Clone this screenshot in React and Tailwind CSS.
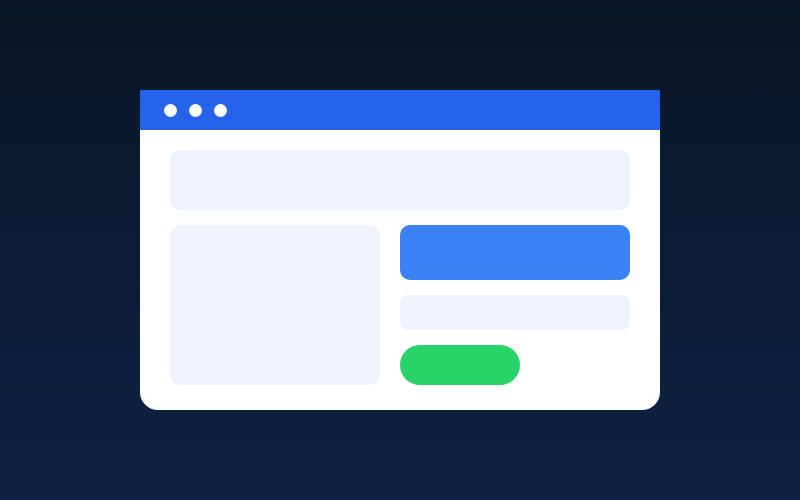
export default function App() {
  return (
    <div className="flex h-[500px] w-[800px] items-center justify-center bg-gradient-to-b from-[#0a1628] to-[#0f2245]">
      <div className="flex h-[320px] w-[520px] flex-col overflow-hidden rounded-b-[18px] bg-white">
        {/* title bar */}
        <div className="flex h-[40px] shrink-0 items-center gap-[12px] bg-[#2563eb] pl-[24px]">
          <span className="h-[13px] w-[13px] rounded-full bg-white" />
          <span className="h-[13px] w-[13px] rounded-full bg-white" />
          <span className="h-[13px] w-[13px] rounded-full bg-white" />
        </div>

        <div className="flex flex-col gap-[15px] px-[30px] pt-[20px]">
          <div className="h-[60px] rounded-[10px] bg-[#eef3fe]" />
          <div className="flex gap-[20px]">
            <div className="h-[160px] w-[210px] rounded-[10px] bg-[#eef3fe]" />
            <div className="flex flex-1 flex-col gap-[15px]">
              <div className="h-[55px] rounded-[10px] bg-[#3b82f6]" />
              <div className="h-[35px] rounded-[8px] bg-[#eef3fe]" />
              <div className="h-[40px] w-[120px] rounded-full bg-[#28d367]" />
            </div>
          </div>
        </div>
      </div>
    </div>
  );
}
